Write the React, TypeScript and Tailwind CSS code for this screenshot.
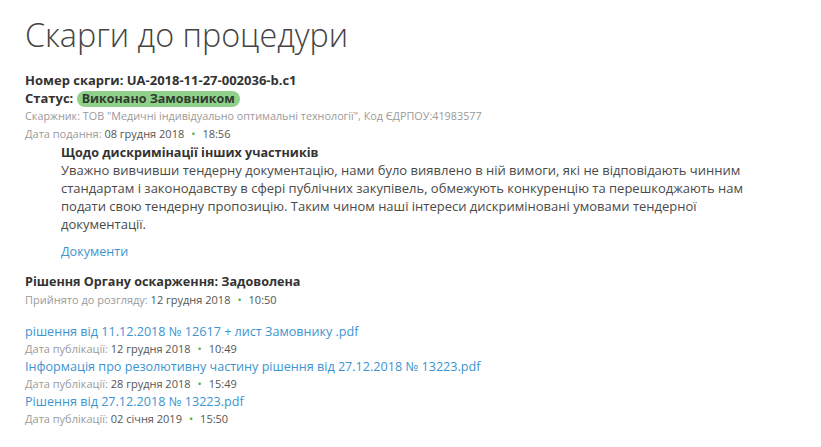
import React from 'react';

const docs = [
  { title: 'рішення від 11.12.2018 № 12617 + лист Замовнику .pdf', date: '12 грудня 2018', time: '10:49' },
  { title: 'Інформація про резолютивну частину рішення від 27.12.2018 № 13223.pdf', date: '28 грудня 2018', time: '15:49' },
  { title: 'Рішення від 27.12.2018 № 13223.pdf', date: '02 січня 2019', time: '15:50' },
];

const DateLine: React.FC<{ label: string; date: string; time: string }> = ({ label, date, time }) => (
  <div className="text-[11px] leading-[18px] text-[#9a9a9a]">
    {label} <span className="text-[#555]">{date}</span>
    <span className="mx-[7px] text-[#4caf50]">•</span>
    <span className="text-[#555]">{time}</span>
  </div>
);

export default function App() {
  return (
    <div className="min-h-[447px] bg-white px-[25px] pt-[12px] font-['Open_Sans',sans-serif] text-[13px] text-[#333]">
      <h1 className="text-[32.3px] font-light leading-[44px] text-[#444]">Скарги до процедури</h1>

      <div className="mt-[15px] font-bold leading-[18px]">Номер скарги: UA-2018-11-27-002036-b.c1</div>
      <div className="font-bold leading-[18px]">
        Статус:{' '}
        <span className="inline-block rounded-full bg-[#8fd08b] px-[5px] text-[12.5px] leading-[16px] text-[#2f3a2f]">
          Виконано Замовником
        </span>
      </div>
      <div className="text-[10.8px] leading-[18px] text-[#9a9a9a]">
        Скаржник: ТОВ "Медичні індивідуально оптимальні технології", Код ЄДРПОУ:41983577
      </div>
      <DateLine label="Дата подання:" date="08 грудня 2018" time="18:56" />

      <div className="ml-[36px] w-[690px]">
        <div className="mt-[1px] text-[12.6px] font-bold leading-[17px]">Щодо дискримінації інших участників</div>
        <p className="leading-[18px] text-[#4a4a4a]">
          Уважно вивчивши тендерну документацію, нами було виявлено в ній вимоги, які не відповідають чинним
          стандартам і законодавству в сфері публічних закупівель, обмежують конкуренцію та перешкоджають нам
          подати свою тендерну пропозицію. Таким чином наші інтереси дискриміновані умовами тендерної
          документації.
        </p>
        <a href="#" className="mt-[10px] block text-[12.6px] leading-[18px] text-[#3b95d0]">Документи</a>
      </div>

      <div className="mt-[12px] text-[12.6px] font-bold leading-[18px]">Рішення Органу оскарження: Задоволена</div>
      <DateLine label="Прийнято до розгляду:" date="12 грудня 2018" time="10:50" />

      <div className="mt-[14px]">
        {docs.map((d) => (
          <div key={d.title}>
            <a href="#" className="block text-[12.6px] leading-[17px] text-[#3b95d0]">{d.title}</a>
            <DateLine label="Дата публікації:" date={d.date} time={d.time} />
          </div>
        ))}
      </div>
    </div>
  );
}
